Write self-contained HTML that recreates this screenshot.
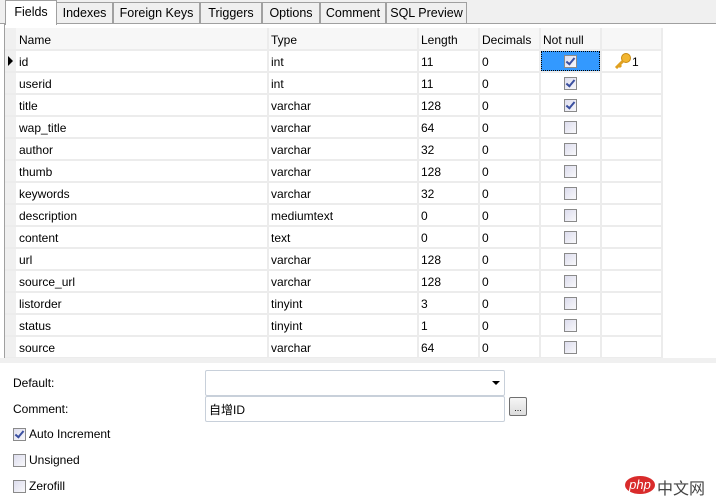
<html><head><style>
body{margin:0;width:716px;height:504px;background:#fff;font-family:"Liberation Sans",Tahoma,sans-serif;font-size:12px;color:#000;position:relative;overflow:hidden}
.a{position:absolute}
.tab{position:absolute;top:2px;height:20px;border:1px solid #a0a0a0;border-bottom:none;background:#f0f0f0;line-height:20px;text-align:center;font-size:12.5px}
.cb{position:absolute;width:11px;height:11px;border:1px solid #8a8a8a;background:linear-gradient(135deg,#dde 0%,#f8f8fa 100%)}
.ck::after{content:"";position:absolute;left:3px;top:0px;width:3px;height:7px;border:solid #3a4fa0;border-width:0 2px 2px 0;transform:rotate(40deg)}
.t{position:absolute;white-space:nowrap}
</style></head><body>
<div class="a" style="left:0;top:0;width:716px;height:23px;background:#f0f0f0"></div>
<div class="a" style="left:0;top:23px;width:716px;height:1px;background:#a0a0a0"></div>
<div class="tab" style="left:56px;width:55px">Indexes</div>
<div class="tab" style="left:113px;width:85px">Foreign Keys</div>
<div class="tab" style="left:200px;width:60px">Triggers</div>
<div class="tab" style="left:262px;width:56px">Options</div>
<div class="tab" style="left:320px;width:64px">Comment</div>
<div class="tab" style="left:386px;width:79px">SQL Preview</div>
<div class="tab" style="left:5px;top:0;width:50px;height:24px;background:#fff;line-height:23px">Fields</div>
<div class="a" style="left:4px;top:24px;width:1px;height:336px;background:#a0a0a0"></div>
<div id="g"></div>
<div class="a" style="left:0;top:358px;width:716px;height:5px;background:#f0f0f0"></div>
<div class="t" style="left:13px;top:376px">Default:</div>
<div class="a" style="left:205px;top:370px;width:298px;height:24px;border:1px solid #c8d0da;border-radius:2px"></div>
<div class="a" style="left:492px;top:381px;border:4px solid transparent;border-top:4px solid #000;border-bottom:none"></div>
<div class="t" style="left:13px;top:402px">Comment:</div>
<div class="a" style="left:205px;top:396px;width:298px;height:24px;border:1px solid #c8d0da;border-radius:2px"></div>
<div class="t" style="left:209px;top:401px;font-family:'Liberation Sans','Noto Sans CJK SC',sans-serif">自增ID</div>
<div class="a" style="left:509px;top:397px;width:16px;height:17px;border:1px solid #707070;border-radius:2px;background:linear-gradient(#f6f6f6,#dcdcdc);font-size:9px;text-align:center;line-height:20px">...</div>
<div class="cb ck" style="left:13px;top:428px"></div><div class="t" style="left:29px;top:427px">Auto Increment</div>
<div class="cb" style="left:13px;top:454px"></div><div class="t" style="left:29px;top:453px">Unsigned</div>
<div class="cb" style="left:13px;top:480px"></div><div class="t" style="left:29px;top:479px">Zerofill</div>
<div class="a" style="left:625px;top:476px;width:30px;height:18px;background:#d92b2b;border-radius:50%;color:#fff;font-size:13px;font-style:italic;text-align:center;line-height:17px">php</div>
<div class="t" style="left:657px;top:475px;font-size:16px;color:#444;font-family:'Liberation Sans','Noto Sans CJK SC',sans-serif">中文网</div>
<script>
var rows=[["id","int",11],["userid","int",11],["title","varchar",128],["wap_title","varchar",64],["author","varchar",32],["thumb","varchar",128],["keywords","varchar",32],["description","mediumtext",0],["content","text",0],["url","varchar",128],["source_url","varchar",128],["listorder","tinyint",3],["status","tinyint",1],["source","varchar",64]];
var h='';var cols=[16,268,418,479,540,601,662];
h+='<div class="a" style="left:16px;top:28px;width:646px;height:22px;background:#f7f7f7"></div>';
h+='<div class="a" style="left:5px;top:28px;width:11px;height:330px;background:#f0f0f0"></div>';
for(var c=1;c<cols.length;c++)h+='<div class="a" style="left:'+(cols[c]-1)+'px;top:28px;width:2px;height:330px;background:#ececec"></div>';
for(var r=0;r<=14;r++)h+='<div class="a" style="left:5px;top:'+(49+r*22)+'px;width:657px;height:2px;background:#ececec"></div>';
var hd=["Name","Type","Length","Decimals","Not null"];
for(var i=0;i<5;i++)h+='<div class="t" style="left:'+(cols[i]+3)+'px;top:33px">'+hd[i]+'</div>';
rows.forEach(function(w,r){var y=50+r*22;
h+='<div class="t" style="left:19px;top:'+(y+5)+'px">'+w[0]+'</div>';
h+='<div class="t" style="left:271px;top:'+(y+5)+'px">'+w[1]+'</div>';
h+='<div class="t" style="left:421px;top:'+(y+5)+'px">'+w[2]+'</div>';
h+='<div class="t" style="left:482px;top:'+(y+5)+'px">0</div>';
if(r==0)h+='<div class="a" style="left:541px;top:'+(y+1)+'px;width:57px;height:18px;background:#3399ff;border:1px dotted #000"></div>';
h+='<div class="cb'+(r<3?' ck':'')+'" style="left:564px;top:'+(y+5)+'px"></div>';});
h+='<div class="a" style="left:8px;top:56px;border:5px solid transparent;border-left:5px solid #000;border-right:none"></div>';
h+='<svg class="a" style="left:614px;top:53px" width="18" height="16"><circle cx="12" cy="5" r="4.5" fill="#f2b631" stroke="#c88a10"/><path d="M9 8 L2 15 M5 12 L7 14" stroke="#e0a020" stroke-width="3"/></svg><div class="t" style="left:632px;top:55px">1</div>';
document.getElementById('g').innerHTML=h;
</script>
</body></html>
